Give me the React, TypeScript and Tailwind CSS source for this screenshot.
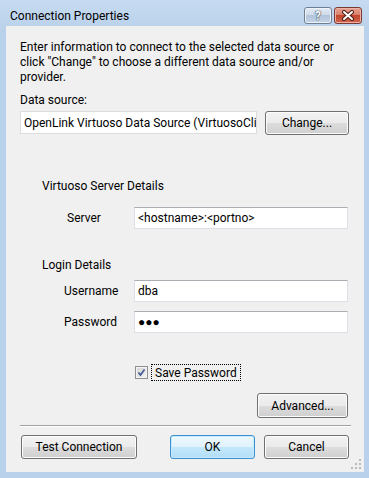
import React from "react";

const font = { fontFamily: "Roboto, 'Noto Sans', sans-serif" };

function WinButton({
  label,
  width,
  primary,
  className = "",
}: {
  label: string;
  width: string;
  primary?: boolean;
  className?: string;
}) {
  return (
    <div
      className={`${width} h-[24px] rounded-[3px] border flex items-center justify-center text-[12px] text-black ${
        primary
          ? "border-[#3c8fd1] bg-[linear-gradient(to_bottom,#eef8fe_0%,#dff2fc_50%,#c4e8fc_50%,#b2def6_100%)] shadow-[inset_0_0_0_1px_#c7eafd]"
          : "border-[#707070] bg-[linear-gradient(to_bottom,#f2f2f2_0%,#ebebeb_50%,#dddddd_50%,#cfcfcf_100%)] shadow-[inset_0_0_0_1px_#fcfcfc]"
      } ${className}`}
    >
      {label}
    </div>
  );
}

function TextBox({ value, className = "" }: { value: string; className?: string }) {
  return (
    <div
      className={`h-[22px] bg-white border border-[#dbdfe6] border-t-[#abadb3] flex items-center pl-[3px] text-[12px] text-black overflow-hidden whitespace-nowrap ${className}`}
    >
      {value}
    </div>
  );
}

export default function App() {
  return (
    <div
      className="w-[369px] h-[478px] flex flex-col bg-[linear-gradient(to_bottom,#c6dbf1_0px,#b9d1ea_30px,#b9d1ea_100%)] overflow-hidden"
      style={font}
    >
      {/* Title bar */}
      <div className="h-[26px] flex items-start relative">
        <span className="ml-[10px] mt-[9px] text-[12px] leading-[15px] text-black">Connection Properties</span>
        <div className="ml-auto mr-[7px] mt-[7px] flex gap-[2px]">
          <div className="w-[28px] h-[17px] rounded-[3px] border border-[#6f7f93] bg-[linear-gradient(to_bottom,#e3ebf5_0%,#cdd9e8_50%,#b4c5db_50%,#c3d3e7_100%)] flex items-center justify-center shadow-[inset_0_0_0_1px_#eef3f9]">
            <span className="text-[12px] font-bold leading-none text-white [text-shadow:0_0_1px_#2c3e57,0_0_1px_#2c3e57,0_0_1px_#2c3e57]">?</span>
          </div>
          <div className="w-[28px] h-[17px] rounded-[3px] border border-[#7a3a33] bg-[linear-gradient(to_bottom,#e8a493_0%,#d77a64_50%,#c2452c_50%,#d0674d_100%)] flex items-center justify-center shadow-[inset_0_0_0_1px_#eab3a6]">
            <svg width="14" height="11" viewBox="0 0 14 11">
              <path d="M3 2 L11 9 M11 2 L3 9" stroke="#4a1a14" strokeWidth="4" strokeLinecap="round" />
              <path d="M3 2 L11 9 M11 2 L3 9" stroke="#ffffff" strokeWidth="2" strokeLinecap="round" />
            </svg>
          </div>
        </div>
      </div>

      {/* Client area */}
      <div className="ml-[6px] mr-[5px] mb-[6px] flex-1 bg-[#f0f0f0] relative flex flex-col pl-[14px] text-[12px] text-black">
        <p className="mt-[14px] leading-[15px] pr-[20px]">
          Enter information to connect to the selected data source or click "Change" to choose a different data source and/or provider.
        </p>
        <div className="mt-[8px] leading-[15px]">Data source:</div>
        <div className="mt-[3px] flex items-start gap-[8px]">
          <div className="w-[237px] h-[23px] bg-white border border-[#dcdcdc] flex items-center pl-[3px] overflow-hidden whitespace-nowrap">
            OpenLink Virtuoso Data Source (VirtuosoClie
          </div>
          <WinButton label="Change..." width="w-[84px]" />
        </div>

        <div className="mt-[44px] ml-[22px] leading-[15px]">Virtuoso Server Details</div>
        <div className="mt-[13px] flex items-center">
          <span className="ml-[47px] w-[67px]">Server</span>
          <TextBox value="<hostname>:<portno>" className="w-[214px]" />
        </div>

        <div className="mt-[29px] ml-[22px] leading-[15px]">Login Details</div>
        <div className="mt-[7px] flex items-center">
          <span className="ml-[44px] w-[70px]">Username</span>
          <TextBox value="dba" className="w-[214px]" />
        </div>
        <div className="mt-[9px] flex items-center">
          <span className="ml-[44px] w-[70px]">Password</span>
          <TextBox value="●●●" className="w-[214px] text-[9px]" />
        </div>

        <div className="mt-[31px] h-[17px] flex items-center">
          <div className="ml-[115px] w-[13px] h-[13px] border border-[#8e8f8f] bg-[linear-gradient(135deg,#d4d4d4,#f4f4f4)] flex items-center justify-center shadow-[inset_0_0_0_1px_#f4f4f4]">
            <svg width="9" height="9" viewBox="0 0 9 9">
              <path d="M1.5 4.5 L3.5 7 L7.5 1.5" stroke="#4a5f97" strokeWidth="1.8" fill="none" />
            </svg>
          </div>
          <div className="ml-[3px] h-[17px] border border-dotted border-black flex items-center px-[3px] leading-none">
            Save Password
          </div>
        </div>

        <div className="mt-[12px] flex">
          <WinButton label="Advanced..." width="w-[91px] h-[25px]" className="ml-[237px]" />
        </div>

        <div className="mt-[7px] h-px w-[331px] bg-[#a0a0a0] border-b border-white box-content" />

        <div className="mt-[8px] flex">
          <WinButton label="Test Connection" width="w-[116px]" className="ml-[1px]" />
          <WinButton label="OK" width="w-[85px]" primary className="ml-[33px]" />
          <WinButton label="Cancel" width="w-[85px]" className="ml-[9px]" />
        </div>

        {/* resize grip */}
        <svg className="absolute right-[3px] bottom-[3px]" width="10" height="10" viewBox="0 0 10 10">
          {[
            [8, 0],
            [8, 4],
            [4, 4],
            [8, 8],
            [4, 8],
            [0, 8],
          ].map(([x, y]) => (
            <rect key={`${x}-${y}`} x={x} y={y} width="2" height="2" fill="#b9b9b9" />
          ))}
        </svg>
      </div>
    </div>
  );
}
